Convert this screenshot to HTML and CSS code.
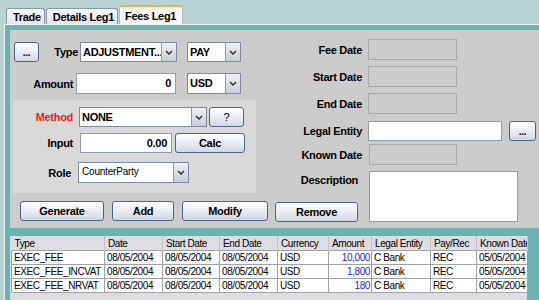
FILE: index.html
```html
<!DOCTYPE HTML><html><head><title>Fees Leg1</title><meta name="viewport" content="width=device-width, initial-scale=1">
<link rel="stylesheet" href="styles.css">
</head><body>
<div class="tabs">
<div class="tab">Trade</div><div class="tab">Details Leg1</div><div class="tab on">Fees Leg1</div>
</div>
<div class="pane">
<div class="form">
<div class="left">
<div class="row r1">
<button class="btn dots">...</button>
<span class="lbl l-type">Type</span>
<div class="combo w-type"><span>ADJUSTMENT...</span><i class="arr"><svg width="8" height="5" viewBox="0 0 8 5"><path d="M1 1l3 3 3-3" fill="none" stroke="#333" stroke-width="1.5"/></svg></i></div>
<div class="combo w-ccy"><span>PAY</span><i class="arr"><svg width="8" height="5" viewBox="0 0 8 5"><path d="M1 1l3 3 3-3" fill="none" stroke="#333" stroke-width="1.5"/></svg></i></div>
</div>
<div class="row r2">
<span class="lbl l-amt">Amount</span>
<div class="field f-amt">0</div>
<div class="combo w-ccy"><span>USD</span><i class="arr"><svg width="8" height="5" viewBox="0 0 8 5"><path d="M1 1l3 3 3-3" fill="none" stroke="#333" stroke-width="1.5"/></svg></i></div>
</div>
<div class="method">
<div class="row m1">
<span class="lbl l-m red">Method</span>
<div class="combo w-meth"><span>NONE</span><i class="arr"><svg width="8" height="5" viewBox="0 0 8 5"><path d="M1 1l3 3 3-3" fill="none" stroke="#333" stroke-width="1.5"/></svg></i></div>
<button class="btn q">?</button>
</div>
<div class="row m2">
<span class="lbl l-m">Input</span>
<div class="field f-in">0.00</div>
<button class="btn calc">Calc</button>
</div>
<div class="row m3">
<span class="lbl l-role">Role</span>
<div class="combo w-role"><span class="thin">CounterParty</span><i class="arr"><svg width="8" height="5" viewBox="0 0 8 5"><path d="M1 1l3 3 3-3" fill="none" stroke="#333" stroke-width="1.5"/></svg></i></div>
</div>
</div>
<div class="row acts">
<button class="btn b-gen">Generate</button>
<button class="btn b-add">Add</button>
<button class="btn b-mod">Modify</button>
</div>
</div>
<div class="right">
<div class="frow"><span class="rl">Fee Date</span><div class="box off w-d"></div></div>
<div class="frow"><span class="rl">Start Date</span><div class="box off w-d"></div></div>
<div class="frow"><span class="rl">End Date</span><div class="box off w-d"></div></div>
<div class="frow le"><span class="rl">Legal Entity</span><div class="box w-le"></div><button class="btn dots2">...</button></div>
<div class="frow kd"><span class="rl">Known Date</span><div class="box off w-kd"></div></div>
<div class="frow desc"><div class="dcell"><span class="dl">Description</span><button class="btn b-rem">Remove</button></div><div class="box w-desc"></div></div>
</div>
</div>
<div class="list">
<table class="grid">
<colgroup><col class="c1"><col class="c2"><col class="c3"><col class="c4"><col class="c5"><col class="c6"><col class="c7"><col class="c8"><col class="c9"></colgroup>
<tr><th>Type</th><th>Date</th><th>Start Date</th><th>End Date</th><th>Currency</th><th>Amount</th><th>Legal Entity</th><th>Pay/Rec</th><th>Known Date</th></tr>
<tr><td>EXEC_FEE</td><td>08/05/2004</td><td>08/05/2004</td><td>08/05/2004</td><td>USD</td><td class="num">10,000</td><td>C Bank</td><td>REC</td><td>05/05/2004</td></tr>
<tr><td>EXEC_FEE_INCVAT</td><td>08/05/2004</td><td>08/05/2004</td><td>08/05/2004</td><td>USD</td><td class="num">1,800</td><td>C Bank</td><td>REC</td><td>05/05/2004</td></tr>
<tr><td>EXEC_FEE_NRVAT</td><td>08/05/2004</td><td>08/05/2004</td><td>08/05/2004</td><td>USD</td><td class="num">180</td><td>C Bank</td><td>REC</td><td>05/05/2004</td></tr>
</table>
</div>
</div>
</body></html>
```
FILE: styles.css
```css
html{font-family:"Liberation Sans",Arial,sans-serif}
body{margin:0;padding:0;height:300px;overflow:hidden;background:#b7d3d2;font-size:11px;font-weight:bold;letter-spacing:-0.3px;color:#000}
.tabs{display:flex;align-items:flex-end;height:24px;padding-left:6px}
.tab{height:15px;line-height:16px;padding:0 3px 0 6px;margin-right:1px;border:1px solid #8c98a8;border-bottom:none;border-radius:3px 3px 0 0;background:linear-gradient(#f6f7fb,#e3e6ef)}
.tab.on{height:17px;line-height:19px;padding:0 6px 0 5px;border-top:2px solid #f2b04a;border-color:#f2b04a #b0b8c4 #fff;background:#f7f7f7}
.pane{height:275px;margin-left:4px;border-top:1px solid #eef6f5;border-left:1px solid #eef6f5;padding:5px 0 0 5px;background:#69b3b1;overflow:hidden}
.form{display:flex;height:198px;margin-bottom:8px;background:#cccccc}
.left{width:262px;padding-top:12px}
.row{display:flex;align-items:center}
.lbl{text-align:right}
.red{color:#f01818}
.btn{height:20px;padding:0;border:1px solid #4e6585;border-radius:3px;background:linear-gradient(#ffffff,#d3d8e5);font:inherit;letter-spacing:-0.3px;color:#000;box-sizing:border-box}
.dots{width:25px;margin-left:4px;font-size:10px}
.l-type{width:39px}
.combo{display:flex;box-sizing:border-box;height:20px;border:1px solid #7c8ba2;background:#fff}
.combo span{flex:1;padding-left:2px;line-height:18px;white-space:nowrap;overflow:hidden}
.combo .thin{font-weight:normal;font-size:10px;letter-spacing:-0.2px;padding-left:3px}
.arr{width:14px;display:flex;align-items:center;justify-content:center;border-left:1px solid #8f9bb0;background:linear-gradient(#eef0f5,#c9cfda)}
.w-type{width:97px;margin-left:2px}
.w-ccy{width:54px;margin-left:10px}
.r2{margin-top:11px;height:21px}
.r2 .combo{height:21px;margin-left:11px}
.l-amt{width:63px}
.field{box-sizing:border-box;height:21px;border:1px solid #8e9cb0;background:#fff;text-align:right;line-height:19px;padding-right:4px}
.f-amt{width:100px;margin-left:3px}
.method{width:243px;height:86px;margin:6px 0 0 3px;padding-top:7px;background:#d9d9d9}
.l-m{width:60px}
.w-meth{width:128px;margin-left:6px}
.q{width:35px;margin-left:2px;font-weight:normal}
.m2{margin-top:6px}
.f-in{width:92px;height:20px;margin-left:7px;line-height:18px}
.calc{width:70px;margin-left:3px}
.m3{margin-top:9px}
.l-role{width:58px}
.w-role{width:111px;height:21px;margin-left:7px}
.acts{margin-top:8px}
.b-gen{width:84px;margin-left:10px}
.b-add{width:62px;margin-left:8px}
.b-mod{width:86px;margin-left:8px}
.right{flex:1;padding-top:9px}
.frow{display:flex;align-items:center;height:21px;margin-bottom:6px}
.rl{width:90px;margin-right:6px;text-align:right}
.box{box-sizing:border-box;height:21px;border:1px solid #8e9cb0;background:#fff}
.box.off{border-color:#a9a9a9;background:#cccccc}
.w-d{width:89px}
.le{height:20px;margin-top:7px;margin-bottom:3px}
.w-le{width:134px;height:20px}
.dots2{width:27px;margin-left:7px;font-size:10px}
.w-kd{width:88px;margin-left:1px}
.desc{height:51px;align-items:stretch}
.dcell{width:90px;margin-right:7px;display:flex;flex-direction:column;justify-content:space-between;align-items:flex-start}
.dl{align-self:flex-end;padding:3px 4px 0 0}
.b-rem{width:83px;margin-left:3px}
.w-desc{width:149px;height:51px}
.list{width:517px;height:70px;background:#dddde3}
.grid{border-collapse:collapse;table-layout:fixed;width:516px;margin-left:1px;font-size:10px;font-weight:normal;letter-spacing:-0.4px}
.grid th{height:14px;padding:0 0 0 3px;background:#dddde3;font-weight:normal;text-align:left;border-right:1px solid #c2c2ca;white-space:nowrap;overflow:hidden}
.grid td{height:13px;padding:0 0 0 2px;background:#fff;border:1px solid #a2a2a6;white-space:nowrap;overflow:hidden}
.grid td.num{text-align:right;color:#2424f4;padding:0 1px 0 0}
.c1{width:93px}.c2{width:58px}.c3{width:57px}.c4{width:58px}.c5{width:51px}
.c6{width:43px}.c7{width:59px}.c8{width:46px}.c9{width:51px}
```
